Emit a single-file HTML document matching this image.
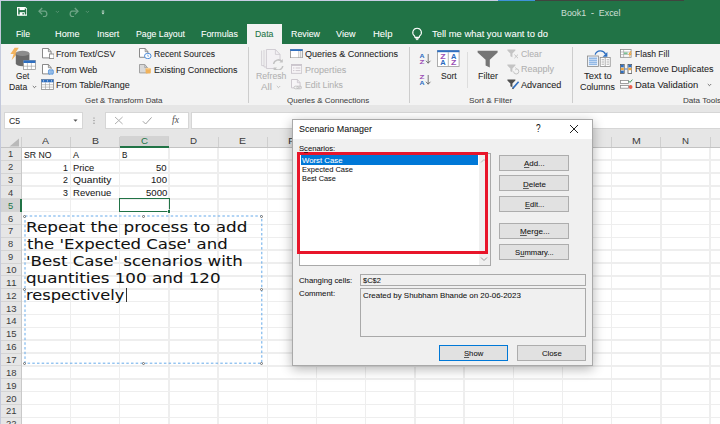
<!DOCTYPE html>
<html lang="en"><head><meta charset="utf-8"><title>Book1 - Excel</title>
<style>
html,body{margin:0;padding:0;background:#fff}
#app{position:relative;width:720px;height:424px;overflow:hidden;background:#fff;font-family:"Liberation Sans",sans-serif}
#app div,#app svg{position:absolute;box-sizing:border-box}
.t{position:absolute;white-space:pre;transform-origin:0 50%;-webkit-text-stroke:0.06px currentColor}
.t u{text-decoration:underline;text-decoration-thickness:0.5px;text-underline-offset:1px;text-decoration-color:rgba(0,0,0,.6)}
.btn{background:#e1e1e1;border:1px solid #adadad}
.fld{background:#f0f0f0;border:1px solid #a9a9a9}
.vl{background:#eeeeee}
.hl{background:#eeeeee}
.hs{background:#cfcfcf}
.rs{background:#d4d4d4}
.hd{width:3px;height:3px;border:0.6px solid #6f6f6f;border-radius:50%;background:#fff}

</style></head>
<body>
<div id="app">
<div style="left:0.00px;top:0.00px;width:720.00px;height:43.80px;background:#217346"></div>
<div style="left:247.30px;top:24.10px;width:35.00px;height:19.90px;background:#f3f3f3"></div>
<div style="left:0.00px;top:43.80px;width:720.00px;height:60.80px;background:#f3f3f3"></div>
<div style="left:247.80px;top:46.80px;width:1.40px;height:55.90px;background:#cdcdcd"></div>
<div style="left:408.80px;top:46.80px;width:1.40px;height:55.90px;background:#cdcdcd"></div>
<div style="left:571.80px;top:46.80px;width:1.40px;height:55.90px;background:#cdcdcd"></div>
<div style="left:467.00px;top:52.00px;width:1.00px;height:36.00px;background:#dddddd"></div>
<div style="left:0.00px;top:104.60px;width:720.00px;height:42.70px;background:#e6e6e6"></div>
<div style="left:3.80px;top:112.00px;width:79.30px;height:16.80px;background:#fff;border:1px solid #d6d6d6"></div>
<div style="left:104.90px;top:112.00px;width:84.20px;height:16.80px;background:#fff;border:1px solid #d6d6d6"></div>
<div style="left:191.00px;top:112.00px;width:530.00px;height:16.80px;background:#fff;border:1px solid #d6d6d6"></div>
<div style="left:0.00px;top:147.30px;width:720.00px;height:276.70px;background:#fff"></div>
<div style="left:0.00px;top:147.30px;width:21.30px;height:276.70px;background:#e6e6e6"></div>
<div style="left:119.70px;top:135.50px;width:49.20px;height:12.40px;background:#d3d3d3"></div>
<div style="left:0.00px;top:198.74px;width:21.30px;height:12.86px;background:#d3d3d3"></div>
<div class="hs" style="left:20.80px;top:136.50px;width:1.00px;height:10.80px;"></div>
<div class="vl" style="left:69.70px;top:147.30px;width:1.60px;height:276.70px;"></div>
<div class="hs" style="left:70.00px;top:136.50px;width:1.00px;height:10.80px;"></div>
<div class="vl" style="left:118.90px;top:147.30px;width:1.60px;height:276.70px;"></div>
<div class="hs" style="left:119.20px;top:136.50px;width:1.00px;height:10.80px;"></div>
<div class="vl" style="left:168.10px;top:147.30px;width:1.60px;height:276.70px;"></div>
<div class="hs" style="left:168.40px;top:136.50px;width:1.00px;height:10.80px;"></div>
<div class="vl" style="left:217.30px;top:147.30px;width:1.60px;height:276.70px;"></div>
<div class="hs" style="left:217.60px;top:136.50px;width:1.00px;height:10.80px;"></div>
<div class="vl" style="left:266.50px;top:147.30px;width:1.60px;height:276.70px;"></div>
<div class="hs" style="left:266.80px;top:136.50px;width:1.00px;height:10.80px;"></div>
<div class="vl" style="left:315.70px;top:147.30px;width:1.60px;height:276.70px;"></div>
<div class="hs" style="left:316.00px;top:136.50px;width:1.00px;height:10.80px;"></div>
<div class="vl" style="left:364.90px;top:147.30px;width:1.60px;height:276.70px;"></div>
<div class="hs" style="left:365.20px;top:136.50px;width:1.00px;height:10.80px;"></div>
<div class="vl" style="left:414.10px;top:147.30px;width:1.60px;height:276.70px;"></div>
<div class="hs" style="left:414.40px;top:136.50px;width:1.00px;height:10.80px;"></div>
<div class="vl" style="left:463.30px;top:147.30px;width:1.60px;height:276.70px;"></div>
<div class="hs" style="left:463.60px;top:136.50px;width:1.00px;height:10.80px;"></div>
<div class="vl" style="left:512.50px;top:147.30px;width:1.60px;height:276.70px;"></div>
<div class="hs" style="left:512.80px;top:136.50px;width:1.00px;height:10.80px;"></div>
<div class="vl" style="left:561.70px;top:147.30px;width:1.60px;height:276.70px;"></div>
<div class="hs" style="left:562.00px;top:136.50px;width:1.00px;height:10.80px;"></div>
<div class="vl" style="left:610.90px;top:147.30px;width:1.60px;height:276.70px;"></div>
<div class="hs" style="left:611.20px;top:136.50px;width:1.00px;height:10.80px;"></div>
<div class="vl" style="left:660.10px;top:147.30px;width:1.60px;height:276.70px;"></div>
<div class="hs" style="left:660.40px;top:136.50px;width:1.00px;height:10.80px;"></div>
<div class="vl" style="left:709.30px;top:147.30px;width:1.60px;height:276.70px;"></div>
<div class="hs" style="left:709.60px;top:136.50px;width:1.00px;height:10.80px;"></div>
<div class="hl" style="left:21.30px;top:159.36px;width:698.70px;height:1.60px;"></div>
<div class="rs" style="left:0.00px;top:159.66px;width:21.30px;height:1.00px;"></div>
<div class="hl" style="left:21.30px;top:172.22px;width:698.70px;height:1.60px;"></div>
<div class="rs" style="left:0.00px;top:172.52px;width:21.30px;height:1.00px;"></div>
<div class="hl" style="left:21.30px;top:185.08px;width:698.70px;height:1.60px;"></div>
<div class="rs" style="left:0.00px;top:185.38px;width:21.30px;height:1.00px;"></div>
<div class="hl" style="left:21.30px;top:197.94px;width:698.70px;height:1.60px;"></div>
<div class="rs" style="left:0.00px;top:198.24px;width:21.30px;height:1.00px;"></div>
<div class="hl" style="left:21.30px;top:210.80px;width:698.70px;height:1.60px;"></div>
<div class="rs" style="left:0.00px;top:211.10px;width:21.30px;height:1.00px;"></div>
<div class="hl" style="left:21.30px;top:223.66px;width:698.70px;height:1.60px;"></div>
<div class="rs" style="left:0.00px;top:223.96px;width:21.30px;height:1.00px;"></div>
<div class="hl" style="left:21.30px;top:236.52px;width:698.70px;height:1.60px;"></div>
<div class="rs" style="left:0.00px;top:236.82px;width:21.30px;height:1.00px;"></div>
<div class="hl" style="left:21.30px;top:249.38px;width:698.70px;height:1.60px;"></div>
<div class="rs" style="left:0.00px;top:249.68px;width:21.30px;height:1.00px;"></div>
<div class="hl" style="left:21.30px;top:262.24px;width:698.70px;height:1.60px;"></div>
<div class="rs" style="left:0.00px;top:262.54px;width:21.30px;height:1.00px;"></div>
<div class="hl" style="left:21.30px;top:275.10px;width:698.70px;height:1.60px;"></div>
<div class="rs" style="left:0.00px;top:275.40px;width:21.30px;height:1.00px;"></div>
<div class="hl" style="left:21.30px;top:287.96px;width:698.70px;height:1.60px;"></div>
<div class="rs" style="left:0.00px;top:288.26px;width:21.30px;height:1.00px;"></div>
<div class="hl" style="left:21.30px;top:300.82px;width:698.70px;height:1.60px;"></div>
<div class="rs" style="left:0.00px;top:301.12px;width:21.30px;height:1.00px;"></div>
<div class="hl" style="left:21.30px;top:313.68px;width:698.70px;height:1.60px;"></div>
<div class="rs" style="left:0.00px;top:313.98px;width:21.30px;height:1.00px;"></div>
<div class="hl" style="left:21.30px;top:326.54px;width:698.70px;height:1.60px;"></div>
<div class="rs" style="left:0.00px;top:326.84px;width:21.30px;height:1.00px;"></div>
<div class="hl" style="left:21.30px;top:339.40px;width:698.70px;height:1.60px;"></div>
<div class="rs" style="left:0.00px;top:339.70px;width:21.30px;height:1.00px;"></div>
<div class="hl" style="left:21.30px;top:352.26px;width:698.70px;height:1.60px;"></div>
<div class="rs" style="left:0.00px;top:352.56px;width:21.30px;height:1.00px;"></div>
<div class="hl" style="left:21.30px;top:365.12px;width:698.70px;height:1.60px;"></div>
<div class="rs" style="left:0.00px;top:365.42px;width:21.30px;height:1.00px;"></div>
<div class="hl" style="left:21.30px;top:377.98px;width:698.70px;height:1.60px;"></div>
<div class="rs" style="left:0.00px;top:378.28px;width:21.30px;height:1.00px;"></div>
<div class="hl" style="left:21.30px;top:390.84px;width:698.70px;height:1.60px;"></div>
<div class="rs" style="left:0.00px;top:391.14px;width:21.30px;height:1.00px;"></div>
<div class="hl" style="left:21.30px;top:403.70px;width:698.70px;height:1.60px;"></div>
<div class="rs" style="left:0.00px;top:404.00px;width:21.30px;height:1.00px;"></div>
<div class="hl" style="left:21.30px;top:416.56px;width:698.70px;height:1.60px;"></div>
<div class="rs" style="left:0.00px;top:416.86px;width:21.30px;height:1.00px;"></div>
<div class="hl" style="left:21.30px;top:429.42px;width:698.70px;height:1.60px;"></div>
<div class="rs" style="left:0.00px;top:429.72px;width:21.30px;height:1.00px;"></div>
<div style="left:0.00px;top:146.70px;width:720.00px;height:1.20px;background:#c3c3c3"></div>
<div style="left:20.70px;top:147.30px;width:1.20px;height:276.70px;background:#c9c9c9"></div>
<div style="left:119.70px;top:146.40px;width:49.20px;height:1.40px;background:#217346"></div>
<div style="left:20.20px;top:198.74px;width:1.40px;height:12.86px;background:#217346"></div>
<svg style="left:9px;top:138px" width="11" height="9" viewBox="0 0 11 9"><path d="M10 0.5V8.5H0.5Z" fill="#b9b9b9"/></svg>
<div style="left:118.90px;top:197.94px;width:50.80px;height:14.46px;border:1.4px solid #217346"></div>
<div style="left:167.60px;top:210.30px;width:2.90px;height:2.90px;background:#217346;box-shadow:0 0 0 0.6px #fff"></div>
<svg style="left:22.8px;top:214px" width="240.8" height="151.2"><rect x="2" y="2" width="236.80" height="147.20" fill="none" stroke="#55a0e8" stroke-width="0.9" stroke-dasharray="2.5 2.2"/></svg>
<div class="hd" style="left:23.30px;top:214.50px;width:3.00px;height:3.00px;"></div>
<div class="hd" style="left:23.30px;top:288.10px;width:3.00px;height:3.00px;"></div>
<div class="hd" style="left:23.30px;top:361.70px;width:3.00px;height:3.00px;"></div>
<div class="hd" style="left:141.70px;top:214.50px;width:3.00px;height:3.00px;"></div>
<div class="hd" style="left:141.70px;top:361.70px;width:3.00px;height:3.00px;"></div>
<div class="hd" style="left:260.10px;top:214.50px;width:3.00px;height:3.00px;"></div>
<div class="hd" style="left:260.10px;top:288.10px;width:3.00px;height:3.00px;"></div>
<div class="hd" style="left:260.10px;top:361.70px;width:3.00px;height:3.00px;"></div>
<div style="left:126.00px;top:287.60px;width:1.00px;height:14.40px;background:#333"></div>
<div style="left:0;top:0;width:720px;height:424px;z-index:5">
<div style="left:292.00px;top:118.60px;width:300.80px;height:247.80px;background:#f0f0f0;border:1px solid #a9a9a9;box-shadow:0 3px 11px 0 rgba(0,0,0,.3)"></div>
<div style="left:293.00px;top:119.60px;width:298.80px;height:19.20px;background:#fff"></div>
<div style="left:298.80px;top:153.00px;width:192.40px;height:112.50px;background:#fff;border:1px solid #a9a9a9"></div>
<div style="left:300.50px;top:155.20px;width:177.30px;height:9.40px;background:#0078d7"></div>
<div style="left:479.00px;top:154.00px;width:11.20px;height:110.50px;background:#f0f0f0"></div>
<svg style="left:479.5px;top:157.5px" width="8" height="6" viewBox="0 0 8 6"><path d="M1 4.5L4 1.5L7 4.5" fill="none" stroke="#b5b5b5" stroke-width="1"/></svg>
<svg style="left:479.5px;top:256px" width="8" height="6" viewBox="0 0 8 6"><path d="M1 1.5L4 4.5L7 1.5" fill="none" stroke="#9c9c9c" stroke-width="1"/></svg>
<div style="left:297.20px;top:152.10px;width:191.10px;height:101.60px;border:3px solid #e8152a"></div>
<div class="btn" style="left:499.20px;top:154.80px;width:69.80px;height:16.00px;"></div>
<div class="btn" style="left:499.20px;top:175.40px;width:69.80px;height:15.60px;"></div>
<div class="btn" style="left:499.20px;top:196.30px;width:69.80px;height:15.70px;"></div>
<div class="btn" style="left:499.20px;top:222.80px;width:69.80px;height:15.90px;"></div>
<div class="btn" style="left:499.20px;top:244.00px;width:69.80px;height:15.80px;"></div>
<div class="fld" style="left:360.00px;top:274.20px;width:226.30px;height:12.10px;"></div>
<div class="fld" style="left:360.00px;top:288.00px;width:226.40px;height:49.00px;"></div>
<div style="left:438.60px;top:345.30px;width:69.10px;height:15.60px;background:#e1e1e1;border:1.6px solid #0078d7"></div>
<div class="btn" style="left:516.80px;top:345.30px;width:69.20px;height:15.60px;"></div>
<svg style="left:569px;top:123.5px" width="10" height="10" viewBox="0 0 10 10"><path d="M1 1L9 9M9 1L1 9" stroke="#222" stroke-width="1" fill="none"/></svg>
</div>
<div style="left:0.00px;top:0.00px;width:498.00px;height:0.80px;background:#c9cde4"></div>
<div style="left:498.00px;top:0.00px;width:37.00px;height:1.20px;background:#3f92d9"></div>
<div style="left:535.00px;top:0.00px;width:148.50px;height:1.20px;background:#40443f"></div>
<div style="left:0.00px;top:1.00px;width:0.80px;height:423.00px;background:#c3c9dc"></div>
<svg style="left:16.60px;top:7.40px;" width="10.60" height="9.00" viewBox="0 0 10.60 9.00"><path d="M0.6 0.6H8.2L9.9 2.1V8.2H0.6Z" fill="none" stroke="#fff" stroke-width="1.2"/><rect x="2.5" y="0.6" width="5.3" height="2.5" fill="#fff"/><rect x="2.7" y="5.2" width="5.1" height="3" fill="#fff"/><rect x="5.5" y="6" width="1.3" height="1.6" fill="#217346"/></svg>
<svg style="left:38.00px;top:7.00px;" width="12.00" height="10.00" viewBox="0 0 12.00 10.00"><path d="M1.2 4.2H7.2A3 3 0 0 1 7.2 9.6H5" fill="none" stroke="#6fa587" stroke-width="1.3"/><path d="M4.2 1L1 4.2L4.2 7.4" fill="none" stroke="#6fa587" stroke-width="1.3"/></svg>
<svg style="left:55.00px;top:10.00px;" width="5.00" height="4.00" viewBox="0 0 5.00 4.00"><path d="M0.8 1L2.4 2.6L4 1" fill="none" stroke="#5f977a" stroke-width="0.8"/></svg>
<svg style="left:67.00px;top:7.00px;" width="12.00" height="10.00" viewBox="0 0 12.00 10.00"><path d="M10.8 4.2H4.8A3 3 0 0 0 4.8 9.6H7" fill="none" stroke="#6fa587" stroke-width="1.3"/><path d="M7.8 1L11 4.2L7.8 7.4" fill="none" stroke="#6fa587" stroke-width="1.3"/></svg>
<svg style="left:84.50px;top:10.00px;" width="5.00" height="4.00" viewBox="0 0 5.00 4.00"><path d="M0.8 1L2.4 2.6L4 1" fill="none" stroke="#5f977a" stroke-width="0.8"/></svg>
<svg style="left:100.50px;top:9.50px;" width="4.00" height="5.50" viewBox="0 0 4.00 5.50"><rect x="0.8" y="0.6" width="2.4" height="0.9" fill="#dfeae4"/><path d="M0.5 2.4H3.5L2 4.4Z" fill="#dfeae4"/></svg>
<svg style="left:411.00px;top:27.00px;" width="12.00" height="14.00" viewBox="0 0 12.00 14.00"><path d="M6.1 1.2A4.3 4.3 0 0 1 8.6 9L8.2 10.4H4L3.6 9A4.3 4.3 0 0 1 6.1 1.2Z" fill="none" stroke="#fff" stroke-width="1.1"/><path d="M4.4 11.4H7.8M4.9 12.6H7.3" stroke="#fff" stroke-width="0.9"/></svg>
<svg style="left:9.00px;top:47.00px;" width="27.00" height="23.50" viewBox="0 0 27.00 23.50"><path d="M5.6 0.8H9.8L6.8 5.2H9.4L2.6 13.2L4.6 7H1.4Z" fill="#f2b35e"/><path d="M6.8 6.4V16.6A6.8 2.6 0 0 0 20.4 16.6V6.4Z" fill="#6a6a6a"/><ellipse cx="13.6" cy="6.4" rx="6.8" ry="2.6" fill="#8c8c8c"/><rect x="14.4" y="13.4" width="12" height="9.2" fill="#fff" stroke="#8a8a8a" stroke-width="0.7"/><rect x="14.4" y="13.4" width="12" height="2.6" fill="#2f6fc0"/><path d="M14.4 19.2H26.4M18.4 16V22.6M22.4 16V22.6" stroke="#9a9a9a" stroke-width="0.6"/></svg>
<svg style="left:31.50px;top:85.00px;" width="5.00" height="4.00" viewBox="0 0 5.00 4.00"><path d="M0.8 1L2.5 2.7L4.2 1" fill="none" stroke="#555" stroke-width="0.8"/></svg>
<svg style="left:41.80px;top:48.20px;" width="12.60" height="11.00" viewBox="0 0 12.60 11.00"><path d="M0.5 0.5H6.40L9.10 3.70V9.90H0.5Z" fill="#fff" stroke="#7c7c7c" stroke-width="0.9"/><path d="M6.40 0.5V3.70H9.10" fill="none" stroke="#7c7c7c" stroke-width="0.8"/><rect x="7.6" y="6" width="4.4" height="4.4" fill="#fff" stroke="#7c7c7c" stroke-width="0.8"/></svg>
<svg style="left:41.80px;top:63.80px;" width="13.00" height="11.40" viewBox="0 0 13.00 11.40"><path d="M0.5 0.5H6.40L9.10 3.70V9.90H0.5Z" fill="#fff" stroke="#7c7c7c" stroke-width="0.9"/><path d="M6.40 0.5V3.70H9.10" fill="none" stroke="#7c7c7c" stroke-width="0.8"/><circle cx="8.9" cy="8" r="3" fill="#4a8bd6"/><path d="M6 8H11.8M8.9 5V11" stroke="#cfe2f7" stroke-width="0.6"/><ellipse cx="8.9" cy="8" rx="1.4" ry="3" fill="none" stroke="#cfe2f7" stroke-width="0.5"/></svg>
<svg style="left:40.80px;top:79.00px;" width="13.00" height="11.00" viewBox="0 0 13.00 11.00"><rect x="0.5" y="0.5" width="12" height="10" fill="#fff" stroke="#8a8a8a" stroke-width="0.8"/><rect x="0.5" y="0.5" width="12" height="2.8" fill="#2f6fc0"/><path d="M0.5 5.7H12.5M0.5 8.1H12.5M4.5 3.3V10.5M8.5 3.3V10.5" stroke="#9a9a9a" stroke-width="0.6"/><path d="M2 1.9H3M6 1.9H7M10 1.9H11" stroke="#fff" stroke-width="0.8"/></svg>
<svg style="left:139.00px;top:48.20px;" width="12.60" height="11.20" viewBox="0 0 12.60 11.20"><path d="M0.5 0.5H6.20L8.90 3.70V9.30H0.5Z" fill="#fff" stroke="#7c7c7c" stroke-width="0.9"/><path d="M6.20 0.5V3.70H8.90" fill="none" stroke="#7c7c7c" stroke-width="0.8"/><ellipse cx="8.8" cy="8" rx="3.3" ry="2.7" fill="#fff" stroke="#3f86d8" stroke-width="0.9"/><path d="M8.8 6.6V8.2H10" stroke="#3f86d8" stroke-width="0.6" fill="none"/></svg>
<svg style="left:139.00px;top:64.40px;" width="12.40" height="10.00" viewBox="0 0 12.40 10.00"><path d="M0.5 0.5H5.80L8.50 3.70V8.90H0.5Z" fill="#d9d9d9" stroke="#9a9a9a" stroke-width="0.9"/><path d="M5.80 0.5V3.70H8.50" fill="none" stroke="#9a9a9a" stroke-width="0.8"/><rect x="6.6" y="4.2" width="5.2" height="5.4" rx="1" fill="#f0b25b"/><ellipse cx="9.2" cy="4.6" rx="2.6" ry="0.9" fill="#f7cf94"/></svg>
<svg style="left:260.60px;top:48.90px;" width="25.50" height="21.50" viewBox="0 0 25.50 21.50"><path d="M0.6 1.6V16.6H3M3 1V18H5.4" fill="none" stroke="#cdc8cf" stroke-width="0.8"/><path d="M5.4 0.5H14.4L19 5.4V19.5H5.4Z" fill="#f3f1f4" stroke="#cdc8cf" stroke-width="0.9"/><path d="M14.4 0.5V5.4H19" fill="none" stroke="#cdc8cf" stroke-width="0.8"/><circle cx="17.2" cy="16" r="5.4" fill="#f3f3f3"/><path d="M12.6 15A4.8 4.8 0 0 1 21 12.6M21.8 17A4.8 4.8 0 0 1 13.4 19.4" fill="none" stroke="#c3c3c3" stroke-width="1.5"/><path d="M21.8 10V13.4H18.4ZM12.6 22V18.6H16Z" fill="#c3c3c3"/></svg>
<svg style="left:275.50px;top:85.00px;" width="5.00" height="4.00" viewBox="0 0 5.00 4.00"><path d="M0.8 1L2.5 2.7L4.2 1" fill="none" stroke="#b5b5b5" stroke-width="0.8"/></svg>
<svg style="left:289.80px;top:48.80px;" width="12.80" height="9.40" viewBox="0 0 12.80 9.40"><rect x="0.5" y="0.5" width="11.8" height="8.4" fill="#fff" stroke="#8a8a8a" stroke-width="0.8"/><rect x="0.2" y="0.2" width="12.4" height="1.8" fill="#2f6fc0"/><path d="M8.8 2V8.9M10.6 2V8.9" stroke="#9a9a9a" stroke-width="0.6"/></svg>
<svg style="left:290.80px;top:64.40px;" width="11.20" height="9.80" viewBox="0 0 11.20 9.80"><rect x="0.5" y="0.5" width="10.2" height="8.8" fill="#f7f5f7" stroke="#c9c4cb" stroke-width="0.9"/><path d="M0.5 1.2H10.7" stroke="#c9c4cb" stroke-width="1.4"/><path d="M2 4H3.4M4.6 4H9.4M2 6.6H3.4M4.6 6.6H9.4" stroke="#c9c4cb" stroke-width="0.9"/></svg>
<svg style="left:290.80px;top:79.40px;" width="11.60" height="10.60" viewBox="0 0 11.60 10.60"><path d="M0.5 0.5H6.40L9.10 3.70V8.90H0.5Z" fill="#f7f5f7" stroke="#c9c4cb" stroke-width="0.9"/><path d="M6.40 0.5V3.70H9.10" fill="none" stroke="#c9c4cb" stroke-width="0.8"/><rect x="3" y="7.2" width="4.6" height="2.6" rx="1.3" fill="#f3f3f3" stroke="#bdbdbd" stroke-width="0.8"/><rect x="6" y="7.2" width="4.6" height="2.6" rx="1.3" fill="none" stroke="#bdbdbd" stroke-width="0.8"/></svg>
<svg style="left:419.00px;top:53.20px;" width="13.00" height="11.60" viewBox="0 0 13.00 11.60"><text x="0.4" y="5.2" font-family="'Liberation Sans',sans-serif" font-weight="bold" font-size="6.2" fill="#2a6bbf" textLength="5" lengthAdjust="spacingAndGlyphs">A</text><text x="0.4" y="10.8" font-family="'Liberation Sans',sans-serif" font-weight="bold" font-size="6.2" fill="#9b4fb5" textLength="5" lengthAdjust="spacingAndGlyphs">Z</text><path d="M9.2 1V10.2M7 7.8L9.2 10.2L11.4 7.8" fill="none" stroke="#555" stroke-width="0.8"/></svg>
<svg style="left:419.00px;top:73.60px;" width="13.00" height="11.60" viewBox="0 0 13.00 11.60"><text x="0.4" y="5.2" font-family="'Liberation Sans',sans-serif" font-weight="bold" font-size="6.2" fill="#9b4fb5" textLength="5" lengthAdjust="spacingAndGlyphs">Z</text><text x="0.4" y="10.8" font-family="'Liberation Sans',sans-serif" font-weight="bold" font-size="6.2" fill="#2a6bbf" textLength="5" lengthAdjust="spacingAndGlyphs">A</text><path d="M9.2 1V10.2M7 7.8L9.2 10.2L11.4 7.8" fill="none" stroke="#555" stroke-width="0.8"/></svg>
<svg style="left:437.20px;top:50.00px;" width="22.60" height="17.00" viewBox="0 0 22.60 17.00"><rect x="0.5" y="0.8" width="21.6" height="15.6" fill="#fff" stroke="#9a9a9a" stroke-width="0.8"/><rect x="0.2" y="0.2" width="22.2" height="2" fill="#2f6fc0"/><path d="M11.3 2.2V16.4" stroke="#9a9a9a" stroke-width="0.7"/><text x="3.2" y="8.8" font-family="'Liberation Sans',sans-serif" font-weight="bold" font-size="6.4" lengthAdjust="spacingAndGlyphs" textLength="5.4" fill="#9b4fb5">Z</text><text x="3.2" y="15.2" font-family="'Liberation Sans',sans-serif" font-weight="bold" font-size="6.4" lengthAdjust="spacingAndGlyphs" textLength="5.4" fill="#2a6bbf">A</text><text x="14" y="8.8" font-family="'Liberation Sans',sans-serif" font-weight="bold" font-size="6.4" lengthAdjust="spacingAndGlyphs" textLength="5.4" fill="#2a6bbf">A</text><text x="14" y="15.2" font-family="'Liberation Sans',sans-serif" font-weight="bold" font-size="6.4" lengthAdjust="spacingAndGlyphs" textLength="5.4" fill="#9b4fb5">Z</text></svg>
<svg style="left:477.00px;top:50.00px;" width="22.00" height="18.50" viewBox="0 0 22.00 18.50"><path d="M0.6 0.8H20.6V2.6L12.8 9.8V17.4L8.6 15.4V9.8L0.6 2.6Z" fill="#757575"/></svg>
<svg style="left:506.50px;top:49.00px;" width="13.00" height="10.50" viewBox="0 0 13.00 10.50"><path d="M0.4 0.6H8.4V1.6L5.4 4.6V8.2L3.4 7.2V4.6L0.4 1.6Z" fill="#c4c4c4"/><path d="M7.4 5.6L11 9.2M11 5.6L7.4 9.2" stroke="#c4c4c4" stroke-width="1"/></svg>
<svg style="left:506.50px;top:64.00px;" width="13.00" height="10.50" viewBox="0 0 13.00 10.50"><path d="M0.4 0.6H8.4V1.6L5.4 4.6V8.2L3.4 7.2V4.6L0.4 1.6Z" fill="#c4c4c4"/><path d="M6.6 7.4A2.6 2.6 0 1 0 9.2 4.8" fill="none" stroke="#c4c4c4" stroke-width="1"/><path d="M8 3.4L9.6 4.8L8 6.2" fill="none" stroke="#c4c4c4" stroke-width="0.8"/></svg>
<svg style="left:506.50px;top:79.20px;" width="13.00" height="10.80" viewBox="0 0 13.00 10.80"><path d="M0.4 0.6H8.4V1.6L5.4 4.6V8.2L3.4 7.2V4.6L0.4 1.6Z" fill="#4f4f4f"/><path d="M5.6 9.6L11.6 2.8" stroke="#2f6fc0" stroke-width="1.6"/><path d="M4.8 10.2L5.8 8.6L6.8 9.6Z" fill="#555"/></svg>
<svg style="left:586.50px;top:50.20px;" width="24.00" height="17.00" viewBox="0 0 24.00 17.00"><rect x="0.5" y="6" width="11" height="10.4" fill="#eaf1fa" stroke="#8a8a8a" stroke-width="0.8"/><path d="M2 8.2H10M2 10.2H10M2 12.2H10M2 14.2H10" stroke="#4a8bd6" stroke-width="0.8"/><rect x="13.2" y="7.4" width="10" height="9" fill="#fff" stroke="#8a8a8a" stroke-width="0.8"/><path d="M18.2 7.4V16.4" stroke="#8a8a8a" stroke-width="0.7"/><path d="M14.6 9.8H17M14.6 12H17M14.6 14.2H17M19.6 9.8H22M19.6 12H22M19.6 14.2H22" stroke="#8a8a8a" stroke-width="0.7"/><path d="M8.2 4.6A5.4 5 0 0 1 18.4 4" fill="none" stroke="#2f6fc0" stroke-width="1.4"/><path d="M20.4 2V6.8H15.6Z" fill="#2f6fc0"/></svg>
<svg style="left:619.60px;top:49.00px;" width="12.40" height="9.00" viewBox="0 0 12.40 9.00"><rect x="0.5" y="0.5" width="10.6" height="7.8" fill="#fff" stroke="#8a8a8a" stroke-width="0.8"/><path d="M0.5 3H11M0.5 5.6H11M3.6 0.5V8.3" stroke="#9a9a9a" stroke-width="0.6"/><rect x="4" y="3.4" width="3.6" height="1.8" fill="#7cc295"/><path d="M10.4 2.2L8.2 5.6H9.8L8.6 8.6L12 4.6H10.2L11.6 2.2Z" fill="#f0a63c"/></svg>
<svg style="left:619.60px;top:63.60px;" width="12.40" height="10.00" viewBox="0 0 12.40 10.00"><rect x="0.4" y="0.4" width="3.8" height="9" fill="#fff" stroke="#555" stroke-width="0.8"/><rect x="0.8" y="0.8" width="3" height="2.6" fill="#2f6fc0"/><rect x="0.8" y="3.8" width="3" height="2.4" fill="#f0a63c"/><rect x="0.8" y="6.6" width="3" height="2.4" fill="#2f6fc0"/><rect x="8" y="0.4" width="3.8" height="9" fill="#fff" stroke="#555" stroke-width="0.8"/><rect x="8.4" y="0.8" width="3" height="2.6" fill="#2f6fc0"/><rect x="8.4" y="3.8" width="3" height="2.4" fill="#f0a63c"/><path d="M4.8 5H7.4" stroke="#2f6fc0" stroke-width="0.9"/></svg>
<svg style="left:619.60px;top:79.00px;" width="13.00" height="10.60" viewBox="0 0 13.00 10.60"><rect x="0.5" y="1.6" width="8" height="2.8" fill="#fff" stroke="#8a8a8a" stroke-width="0.8"/><rect x="0.5" y="6.4" width="8" height="2.8" fill="#fff" stroke="#8a8a8a" stroke-width="0.8"/><path d="M8.6 2L10 3.4L12.4 0.6" fill="none" stroke="#3c9a5f" stroke-width="1"/><circle cx="10.6" cy="8" r="1.9" fill="#e8604c"/></svg>
<svg style="left:706.50px;top:83.00px;" width="5.00" height="4.00" viewBox="0 0 5.00 4.00"><path d="M0.8 1L2.5 2.7L4.2 1" fill="none" stroke="#555" stroke-width="0.8"/></svg>
<svg style="left:72.50px;top:119.00px;" width="5.00" height="3.40" viewBox="0 0 5.00 3.40"><path d="M0.4 0.4H4.6L2.5 2.8Z" fill="#555"/></svg>
<svg style="left:92.50px;top:116.60px;" width="2.00" height="7.40" viewBox="0 0 2.00 7.40"><circle cx="1" cy="1" r="0.6" fill="#777"/><circle cx="1" cy="3.6" r="0.6" fill="#777"/><circle cx="1" cy="6.2" r="0.6" fill="#777"/></svg>
<svg style="left:114.00px;top:116.00px;" width="10.00" height="9.00" viewBox="0 0 10.00 9.00"><path d="M1 1L8.6 8M8.6 1L1 8" stroke="#b0b0b0" stroke-width="1" fill="none"/></svg>
<svg style="left:142.00px;top:116.00px;" width="10.50" height="9.00" viewBox="0 0 10.50 9.00"><path d="M0.8 5.2L3.6 8L9.6 1.4" stroke="#a3a3a3" stroke-width="1" fill="none"/></svg>
<span id="t0" class="t" style="left:561.00px;top:8.20px;font-size:8.5px;line-height:10.20px;color:#c9dcd1;font-family:'Liberation Sans',sans-serif;transform:scaleX(1.0407);">Book1  -  Excel</span>
<span id="t1" class="t" style="left:16.00px;top:29.42px;font-size:8.8px;line-height:10.56px;color:#ffffff;font-family:'Liberation Sans',sans-serif;transform:scaleX(0.9868);">File</span>
<span id="t2" class="t" style="left:55.00px;top:29.42px;font-size:8.8px;line-height:10.56px;color:#ffffff;font-family:'Liberation Sans',sans-serif;transform:scaleX(1.0439);">Home</span>
<span id="t3" class="t" style="left:96.50px;top:29.42px;font-size:8.8px;line-height:10.56px;color:#ffffff;font-family:'Liberation Sans',sans-serif;transform:scaleX(1.0129);">Insert</span>
<span id="t4" class="t" style="left:135.50px;top:29.42px;font-size:8.8px;line-height:10.56px;color:#ffffff;font-family:'Liberation Sans',sans-serif;transform:scaleX(0.9918);">Page Layout</span>
<span id="t5" class="t" style="left:201.00px;top:29.42px;font-size:8.8px;line-height:10.56px;color:#ffffff;font-family:'Liberation Sans',sans-serif;transform:scaleX(1.0089);">Formulas</span>
<span id="t6" class="t" style="left:254.50px;top:29.42px;font-size:8.8px;line-height:10.56px;color:#217346;font-family:'Liberation Sans',sans-serif;transform:scaleX(0.9950);">Data</span>
<span id="t7" class="t" style="left:290.50px;top:29.42px;font-size:8.8px;line-height:10.56px;color:#ffffff;font-family:'Liberation Sans',sans-serif;transform:scaleX(1.0054);">Review</span>
<span id="t8" class="t" style="left:336.00px;top:29.42px;font-size:8.8px;line-height:10.56px;color:#ffffff;font-family:'Liberation Sans',sans-serif;transform:scaleX(1.0306);">View</span>
<span id="t9" class="t" style="left:372.50px;top:29.42px;font-size:8.8px;line-height:10.56px;color:#ffffff;font-family:'Liberation Sans',sans-serif;transform:scaleX(1.0777);">Help</span>
<span id="t10" class="t" style="left:432.00px;top:29.42px;font-size:8.8px;line-height:10.56px;color:#ffffff;font-family:'Liberation Sans',sans-serif;transform:scaleX(1.0685);">Tell me what you want to do</span>
<span id="t11" class="t" style="left:56.20px;top:49.52px;font-size:8.3px;line-height:9.96px;color:#262626;font-family:'Liberation Sans',sans-serif;transform:scaleX(1.0572);">From Text/CSV</span>
<span id="t12" class="t" style="left:56.20px;top:65.82px;font-size:8.3px;line-height:9.96px;color:#262626;font-family:'Liberation Sans',sans-serif;transform:scaleX(1.0706);">From Web</span>
<span id="t13" class="t" style="left:56.20px;top:80.72px;font-size:8.3px;line-height:9.96px;color:#262626;font-family:'Liberation Sans',sans-serif;transform:scaleX(1.0836);">From Table/Range</span>
<span id="t14" class="t" style="left:15.50px;top:71.92px;font-size:8.3px;line-height:9.96px;color:#262626;font-family:'Liberation Sans',sans-serif;transform:scaleX(0.9944);">Get</span>
<span id="t15" class="t" style="left:8.80px;top:82.72px;font-size:8.3px;line-height:9.96px;color:#262626;font-family:'Liberation Sans',sans-serif;transform:scaleX(1.0381);">Data</span>
<span id="t16" class="t" style="left:85.00px;top:96.08px;font-size:7.7px;line-height:9.24px;color:#444;font-family:'Liberation Sans',sans-serif;transform:scaleX(1.0366);">Get &amp; Transform Data</span>
<span id="t17" class="t" style="left:153.50px;top:49.52px;font-size:8.3px;line-height:9.96px;color:#262626;font-family:'Liberation Sans',sans-serif;transform:scaleX(1.0334);">Recent Sources</span>
<span id="t18" class="t" style="left:153.50px;top:65.82px;font-size:8.3px;line-height:9.96px;color:#262626;font-family:'Liberation Sans',sans-serif;transform:scaleX(1.0776);">Existing Connections</span>
<span id="t19" class="t" style="left:255.80px;top:71.52px;font-size:8.3px;line-height:9.96px;color:#b1b1b1;font-family:'Liberation Sans',sans-serif;transform:scaleX(1.0460);">Refresh</span>
<span id="t20" class="t" style="left:261.20px;top:83.32px;font-size:8.3px;line-height:9.96px;color:#b1b1b1;font-family:'Liberation Sans',sans-serif;transform:scaleX(1.1695);">All</span>
<span id="t21" class="t" style="left:305.00px;top:49.52px;font-size:8.3px;line-height:9.96px;color:#262626;font-family:'Liberation Sans',sans-serif;transform:scaleX(1.0899);">Queries &amp; Connections</span>
<span id="t22" class="t" style="left:305.00px;top:65.82px;font-size:8.3px;line-height:9.96px;color:#b1b1b1;font-family:'Liberation Sans',sans-serif;transform:scaleX(1.0891);">Properties</span>
<span id="t23" class="t" style="left:305.00px;top:80.72px;font-size:8.3px;line-height:9.96px;color:#b1b1b1;font-family:'Liberation Sans',sans-serif;transform:scaleX(1.0560);">Edit Links</span>
<span id="t24" class="t" style="left:287.00px;top:96.08px;font-size:7.7px;line-height:9.24px;color:#444;font-family:'Liberation Sans',sans-serif;transform:scaleX(1.0397);">Queries &amp; Connections</span>
<span id="t25" class="t" style="left:440.50px;top:71.52px;font-size:8.3px;line-height:9.96px;color:#262626;font-family:'Liberation Sans',sans-serif;transform:scaleX(1.0316);">Sort</span>
<span id="t26" class="t" style="left:477.50px;top:71.52px;font-size:8.3px;line-height:9.96px;color:#262626;font-family:'Liberation Sans',sans-serif;transform:scaleX(1.0847);">Filter</span>
<span id="t27" class="t" style="left:520.80px;top:49.72px;font-size:8.3px;line-height:9.96px;color:#b1b1b1;font-family:'Liberation Sans',sans-serif;transform:scaleX(1.0490);">Clear</span>
<span id="t28" class="t" style="left:520.80px;top:65.32px;font-size:8.3px;line-height:9.96px;color:#b1b1b1;font-family:'Liberation Sans',sans-serif;transform:scaleX(1.0869);">Reapply</span>
<span id="t29" class="t" style="left:520.80px;top:80.72px;font-size:8.3px;line-height:9.96px;color:#262626;font-family:'Liberation Sans',sans-serif;transform:scaleX(1.0947);">Advanced</span>
<span id="t30" class="t" style="left:468.80px;top:96.08px;font-size:7.7px;line-height:9.24px;color:#444;font-family:'Liberation Sans',sans-serif;transform:scaleX(1.0642);">Sort &amp; Filter</span>
<span id="t31" class="t" style="left:584.00px;top:72.02px;font-size:8.3px;line-height:9.96px;color:#262626;font-family:'Liberation Sans',sans-serif;transform:scaleX(1.1369);">Text to</span>
<span id="t32" class="t" style="left:580.00px;top:82.52px;font-size:8.3px;line-height:9.96px;color:#262626;font-family:'Liberation Sans',sans-serif;transform:scaleX(1.0687);">Columns</span>
<span id="t33" class="t" style="left:634.50px;top:49.72px;font-size:8.3px;line-height:9.96px;color:#262626;font-family:'Liberation Sans',sans-serif;transform:scaleX(1.0330);">Flash Fill</span>
<span id="t34" class="t" style="left:634.50px;top:65.32px;font-size:8.3px;line-height:9.96px;color:#262626;font-family:'Liberation Sans',sans-serif;transform:scaleX(1.0912);">Remove Duplicates</span>
<span id="t35" class="t" style="left:634.50px;top:80.72px;font-size:8.3px;line-height:9.96px;color:#262626;font-family:'Liberation Sans',sans-serif;transform:scaleX(1.1355);">Data Validation</span>
<span id="t36" class="t" style="left:682.50px;top:96.08px;font-size:7.7px;line-height:9.24px;color:#444;font-family:'Liberation Sans',sans-serif;transform:scaleX(1.0528);">Data Tools</span>
<span id="t37" class="t" style="left:8.80px;top:116.26px;font-size:8.4px;line-height:10.08px;color:#333;font-family:'Liberation Sans',sans-serif;transform:scaleX(1.0449);">C5</span>
<span id="t38" class="t" style="left:171.50px;top:115.30px;font-size:9.5px;line-height:11.40px;color:#5a5a5a;font-family:'Liberation Serif',serif;font-style:italic;transform:scaleX(1.0205);">fx</span>
<span id="t39" class="t" style="left:42.40px;top:136.32px;font-size:8.8px;line-height:10.56px;color:#3c3c3c;font-family:'Liberation Sans',sans-serif;-webkit-text-stroke:0;transform:scaleX(1.1915);">A</span>
<span id="t40" class="t" style="left:91.60px;top:136.32px;font-size:8.8px;line-height:10.56px;color:#3c3c3c;font-family:'Liberation Sans',sans-serif;-webkit-text-stroke:0;transform:scaleX(1.1915);">B</span>
<span id="t41" class="t" style="left:140.80px;top:136.32px;font-size:8.8px;line-height:10.56px;color:#217346;font-family:'Liberation Sans',sans-serif;-webkit-text-stroke:0;transform:scaleX(1.1007);">C</span>
<span id="t42" class="t" style="left:190.00px;top:136.32px;font-size:8.8px;line-height:10.56px;color:#3c3c3c;font-family:'Liberation Sans',sans-serif;-webkit-text-stroke:0;transform:scaleX(1.1007);">D</span>
<span id="t43" class="t" style="left:239.20px;top:136.32px;font-size:8.8px;line-height:10.56px;color:#3c3c3c;font-family:'Liberation Sans',sans-serif;-webkit-text-stroke:0;transform:scaleX(1.1915);">E</span>
<span id="t44" class="t" style="left:288.40px;top:136.32px;font-size:8.8px;line-height:10.56px;color:#3c3c3c;font-family:'Liberation Sans',sans-serif;-webkit-text-stroke:0;transform:scaleX(1.3023);">F</span>
<span id="t45" class="t" style="left:337.60px;top:136.32px;font-size:8.8px;line-height:10.56px;color:#3c3c3c;font-family:'Liberation Sans',sans-serif;-webkit-text-stroke:0;transform:scaleX(1.0228);">G</span>
<span id="t46" class="t" style="left:386.80px;top:136.32px;font-size:8.8px;line-height:10.56px;color:#3c3c3c;font-family:'Liberation Sans',sans-serif;-webkit-text-stroke:0;transform:scaleX(1.1007);">H</span>
<span id="t47" class="t" style="left:438.30px;top:136.32px;font-size:8.8px;line-height:10.56px;color:#3c3c3c;font-family:'Liberation Sans',sans-serif;-webkit-text-stroke:0;transform:scaleX(0.9783);">I</span>
<span id="t48" class="t" style="left:486.50px;top:136.32px;font-size:8.8px;line-height:10.56px;color:#3c3c3c;font-family:'Liberation Sans',sans-serif;-webkit-text-stroke:0;transform:scaleX(0.9986);">J</span>
<span id="t49" class="t" style="left:534.40px;top:136.32px;font-size:8.8px;line-height:10.56px;color:#3c3c3c;font-family:'Liberation Sans',sans-serif;-webkit-text-stroke:0;transform:scaleX(1.1915);">K</span>
<span id="t50" class="t" style="left:583.60px;top:136.32px;font-size:8.8px;line-height:10.56px;color:#3c3c3c;font-family:'Liberation Sans',sans-serif;-webkit-text-stroke:0;transform:scaleX(1.4268);">L</span>
<span id="t51" class="t" style="left:631.90px;top:136.32px;font-size:8.8px;line-height:10.56px;color:#3c3c3c;font-family:'Liberation Sans',sans-serif;-webkit-text-stroke:0;transform:scaleX(1.2009);">M</span>
<span id="t52" class="t" style="left:682.00px;top:136.32px;font-size:8.8px;line-height:10.56px;color:#3c3c3c;font-family:'Liberation Sans',sans-serif;-webkit-text-stroke:0;transform:scaleX(1.1007);">N</span>
<span id="t53" class="t" style="left:8.00px;top:149.23px;font-size:9px;line-height:10.80px;color:#3c3c3c;font-family:'Liberation Sans',sans-serif;-webkit-text-stroke:0;transform:scaleX(1.0368);">1</span>
<span id="t54" class="t" style="left:8.00px;top:162.09px;font-size:9px;line-height:10.80px;color:#3c3c3c;font-family:'Liberation Sans',sans-serif;-webkit-text-stroke:0;transform:scaleX(1.0368);">2</span>
<span id="t55" class="t" style="left:8.00px;top:174.95px;font-size:9px;line-height:10.80px;color:#3c3c3c;font-family:'Liberation Sans',sans-serif;-webkit-text-stroke:0;transform:scaleX(1.0368);">3</span>
<span id="t56" class="t" style="left:8.00px;top:187.81px;font-size:9px;line-height:10.80px;color:#3c3c3c;font-family:'Liberation Sans',sans-serif;-webkit-text-stroke:0;transform:scaleX(1.0368);">4</span>
<span id="t57" class="t" style="left:8.00px;top:200.67px;font-size:9px;line-height:10.80px;color:#217346;font-family:'Liberation Sans',sans-serif;-webkit-text-stroke:0;transform:scaleX(1.0368);">5</span>
<span id="t58" class="t" style="left:8.00px;top:213.53px;font-size:9px;line-height:10.80px;color:#3c3c3c;font-family:'Liberation Sans',sans-serif;-webkit-text-stroke:0;transform:scaleX(1.0368);">6</span>
<span id="t59" class="t" style="left:8.00px;top:226.39px;font-size:9px;line-height:10.80px;color:#3c3c3c;font-family:'Liberation Sans',sans-serif;-webkit-text-stroke:0;transform:scaleX(1.0368);">7</span>
<span id="t60" class="t" style="left:8.00px;top:239.25px;font-size:9px;line-height:10.80px;color:#3c3c3c;font-family:'Liberation Sans',sans-serif;-webkit-text-stroke:0;transform:scaleX(1.0368);">8</span>
<span id="t61" class="t" style="left:8.00px;top:252.11px;font-size:9px;line-height:10.80px;color:#3c3c3c;font-family:'Liberation Sans',sans-serif;-webkit-text-stroke:0;transform:scaleX(1.0368);">9</span>
<span id="t62" class="t" style="left:5.90px;top:264.97px;font-size:9px;line-height:10.80px;color:#3c3c3c;font-family:'Liberation Sans',sans-serif;-webkit-text-stroke:0;transform:scaleX(1.0583);">10</span>
<span id="t63" class="t" style="left:5.90px;top:277.83px;font-size:9px;line-height:10.80px;color:#3c3c3c;font-family:'Liberation Sans',sans-serif;-webkit-text-stroke:0;transform:scaleX(1.1344);">11</span>
<span id="t64" class="t" style="left:5.90px;top:290.69px;font-size:9px;line-height:10.80px;color:#3c3c3c;font-family:'Liberation Sans',sans-serif;-webkit-text-stroke:0;transform:scaleX(1.0583);">12</span>
<span id="t65" class="t" style="left:5.90px;top:303.55px;font-size:9px;line-height:10.80px;color:#3c3c3c;font-family:'Liberation Sans',sans-serif;-webkit-text-stroke:0;transform:scaleX(1.0583);">13</span>
<span id="t66" class="t" style="left:5.90px;top:316.41px;font-size:9px;line-height:10.80px;color:#3c3c3c;font-family:'Liberation Sans',sans-serif;-webkit-text-stroke:0;transform:scaleX(1.0583);">14</span>
<span id="t67" class="t" style="left:5.90px;top:329.27px;font-size:9px;line-height:10.80px;color:#3c3c3c;font-family:'Liberation Sans',sans-serif;-webkit-text-stroke:0;transform:scaleX(1.0583);">15</span>
<span id="t68" class="t" style="left:5.90px;top:342.13px;font-size:9px;line-height:10.80px;color:#3c3c3c;font-family:'Liberation Sans',sans-serif;-webkit-text-stroke:0;transform:scaleX(1.0583);">16</span>
<span id="t69" class="t" style="left:5.90px;top:354.99px;font-size:9px;line-height:10.80px;color:#3c3c3c;font-family:'Liberation Sans',sans-serif;-webkit-text-stroke:0;transform:scaleX(1.0583);">17</span>
<span id="t70" class="t" style="left:5.90px;top:367.85px;font-size:9px;line-height:10.80px;color:#3c3c3c;font-family:'Liberation Sans',sans-serif;-webkit-text-stroke:0;transform:scaleX(1.0583);">18</span>
<span id="t71" class="t" style="left:5.90px;top:380.71px;font-size:9px;line-height:10.80px;color:#3c3c3c;font-family:'Liberation Sans',sans-serif;-webkit-text-stroke:0;transform:scaleX(1.0583);">19</span>
<span id="t72" class="t" style="left:5.90px;top:393.57px;font-size:9px;line-height:10.80px;color:#3c3c3c;font-family:'Liberation Sans',sans-serif;-webkit-text-stroke:0;transform:scaleX(1.0583);">20</span>
<span id="t73" class="t" style="left:5.90px;top:406.43px;font-size:9px;line-height:10.80px;color:#3c3c3c;font-family:'Liberation Sans',sans-serif;-webkit-text-stroke:0;transform:scaleX(1.0583);">21</span>
<span id="t74" class="t" style="left:5.90px;top:419.29px;font-size:9px;line-height:10.80px;color:#3c3c3c;font-family:'Liberation Sans',sans-serif;-webkit-text-stroke:0;transform:scaleX(1.0583);">22</span>
<span id="t75" class="t" style="left:23.80px;top:150.72px;font-size:8.3px;line-height:9.96px;color:#1a1a1a;font-family:'Liberation Sans',sans-serif;transform:scaleX(1.0426);">SR NO</span>
<span id="t76" class="t" style="left:72.50px;top:150.72px;font-size:8.3px;line-height:9.96px;color:#1a1a1a;font-family:'Liberation Sans',sans-serif;transform:scaleX(1.0817);">A</span>
<span id="t77" class="t" style="left:121.80px;top:150.72px;font-size:8.3px;line-height:9.96px;color:#1a1a1a;font-family:'Liberation Sans',sans-serif;transform:scaleX(0.9735);">B</span>
<span id="t78" class="t" style="left:62.60px;top:163.72px;font-size:8.3px;line-height:9.96px;color:#1a1a1a;font-family:'Liberation Sans',sans-serif;transform:scaleX(1.0595);">1</span>
<span id="t79" class="t" style="left:62.60px;top:175.92px;font-size:8.3px;line-height:9.96px;color:#1a1a1a;font-family:'Liberation Sans',sans-serif;transform:scaleX(1.0595);">2</span>
<span id="t80" class="t" style="left:62.60px;top:188.62px;font-size:8.3px;line-height:9.96px;color:#1a1a1a;font-family:'Liberation Sans',sans-serif;transform:scaleX(1.0595);">3</span>
<span id="t81" class="t" style="left:72.50px;top:163.72px;font-size:8.3px;line-height:9.96px;color:#1a1a1a;font-family:'Liberation Sans',sans-serif;transform:scaleX(1.1266);">Price</span>
<span id="t82" class="t" style="left:72.50px;top:175.92px;font-size:8.3px;line-height:9.96px;color:#1a1a1a;font-family:'Liberation Sans',sans-serif;transform:scaleX(1.2392);">Quantity</span>
<span id="t83" class="t" style="left:72.50px;top:188.62px;font-size:8.3px;line-height:9.96px;color:#1a1a1a;font-family:'Liberation Sans',sans-serif;transform:scaleX(1.1530);">Revenue</span>
<span id="t84" class="t" style="left:156.20px;top:163.72px;font-size:8.3px;line-height:9.96px;color:#1a1a1a;font-family:'Liberation Sans',sans-serif;transform:scaleX(1.1479);">50</span>
<span id="t85" class="t" style="left:150.80px;top:175.92px;font-size:8.3px;line-height:9.96px;color:#1a1a1a;font-family:'Liberation Sans',sans-serif;transform:scaleX(1.1558);">100</span>
<span id="t86" class="t" style="left:145.50px;top:188.62px;font-size:8.3px;line-height:9.96px;color:#1a1a1a;font-family:'Liberation Sans',sans-serif;transform:scaleX(1.1533);">5000</span>
<span id="t87" class="t" style="left:26.00px;top:218.66px;font-size:14.4px;line-height:17.28px;color:#111;font-family:'DejaVu Sans','Liberation Sans',sans-serif;transform:scaleX(1.1689);">Repeat the process to add</span>
<span id="t88" class="t" style="left:26.80px;top:235.66px;font-size:14.4px;line-height:17.28px;color:#111;font-family:'DejaVu Sans','Liberation Sans',sans-serif;transform:scaleX(1.1489);">the 'Expected Case' and</span>
<span id="t89" class="t" style="left:25.90px;top:252.66px;font-size:14.4px;line-height:17.28px;color:#111;font-family:'DejaVu Sans','Liberation Sans',sans-serif;transform:scaleX(1.1557);">'Best Case' scenarios with</span>
<span id="t90" class="t" style="left:25.80px;top:269.86px;font-size:14.4px;line-height:17.28px;color:#111;font-family:'DejaVu Sans','Liberation Sans',sans-serif;transform:scaleX(1.1614);">quantities 100 and 120</span>
<span id="t91" class="t" style="left:26.30px;top:287.06px;font-size:14.4px;line-height:17.28px;color:#111;font-family:'DejaVu Sans','Liberation Sans',sans-serif;transform:scaleX(1.1248);">respectively</span>
<span id="t92" class="t" style="left:298.80px;top:123.78px;font-size:9.2px;line-height:11.04px;color:#111;font-family:'Liberation Sans',sans-serif;z-index:6;transform:scaleX(0.9723);">Scenario Manager</span>
<span id="t93" class="t" style="left:535.80px;top:122.40px;font-size:10.5px;line-height:12.60px;color:#111;font-family:'Liberation Sans',sans-serif;z-index:6;transform:scaleX(0.7872);">?</span>
<span id="t94" class="t" style="left:298.80px;top:143.80px;font-size:8px;line-height:9.60px;color:#111;font-family:'Liberation Sans',sans-serif;z-index:6;transform:scaleX(0.9574);">S<u>c</u>enarios:</span>
<span id="t95" class="t" style="left:302.00px;top:156.30px;font-size:8px;line-height:9.60px;color:#ffffff;font-family:'Liberation Sans',sans-serif;z-index:6;transform:scaleX(0.9726);">Worst Case</span>
<span id="t96" class="t" style="left:302.00px;top:165.00px;font-size:8px;line-height:9.60px;color:#111;font-family:'Liberation Sans',sans-serif;z-index:6;transform:scaleX(0.9398);">Expected Case</span>
<span id="t97" class="t" style="left:302.00px;top:174.30px;font-size:8px;line-height:9.60px;color:#111;font-family:'Liberation Sans',sans-serif;z-index:6;transform:scaleX(0.9158);">Best Case</span>
<span id="t98" class="t" style="left:523.80px;top:158.70px;font-size:8px;line-height:9.60px;color:#111;font-family:'Liberation Sans',sans-serif;z-index:6;transform:scaleX(0.9894);"><u>A</u>dd...</span>
<span id="t99" class="t" style="left:522.50px;top:179.50px;font-size:8px;line-height:9.60px;color:#111;font-family:'Liberation Sans',sans-serif;z-index:6;transform:scaleX(0.9939);"><u>D</u>elete</span>
<span id="t100" class="t" style="left:524.50px;top:200.30px;font-size:8px;line-height:9.60px;color:#111;font-family:'Liberation Sans',sans-serif;z-index:6;transform:scaleX(0.9429);"><u>E</u>dit...</span>
<span id="t101" class="t" style="left:519.50px;top:226.90px;font-size:8px;line-height:9.60px;color:#111;font-family:'Liberation Sans',sans-serif;z-index:6;transform:scaleX(1.0116);"><u>M</u>erge...</span>
<span id="t102" class="t" style="left:514.50px;top:248.10px;font-size:8px;line-height:9.60px;color:#111;font-family:'Liberation Sans',sans-serif;z-index:6;transform:scaleX(0.9600);">S<u>u</u>mmary...</span>
<span id="t103" class="t" style="left:298.80px;top:275.80px;font-size:8px;line-height:9.60px;color:#111;font-family:'Liberation Sans',sans-serif;z-index:6;transform:scaleX(0.9725);">Changing cells:</span>
<span id="t104" class="t" style="left:363.00px;top:275.80px;font-size:8px;line-height:9.60px;color:#111;font-family:'Liberation Sans',sans-serif;z-index:6;transform:scaleX(0.9307);">$C$2</span>
<span id="t105" class="t" style="left:298.80px;top:288.80px;font-size:8px;line-height:9.60px;color:#111;font-family:'Liberation Sans',sans-serif;z-index:6;transform:scaleX(0.9809);">Comment:</span>
<span id="t106" class="t" style="left:363.00px;top:291.20px;font-size:8px;line-height:9.60px;color:#111;font-family:'Liberation Sans',sans-serif;z-index:6;transform:scaleX(0.9883);">Created by Shubham Bhande on 20-06-2023</span>
<span id="t107" class="t" style="left:463.80px;top:349.10px;font-size:8px;line-height:9.60px;color:#111;font-family:'Liberation Sans',sans-serif;z-index:6;transform:scaleX(0.9585);"><u>S</u>how</span>
<span id="t108" class="t" style="left:542.00px;top:349.10px;font-size:8px;line-height:9.60px;color:#111;font-family:'Liberation Sans',sans-serif;z-index:6;transform:scaleX(0.9681);">Close</span>
</div>
</body></html>
